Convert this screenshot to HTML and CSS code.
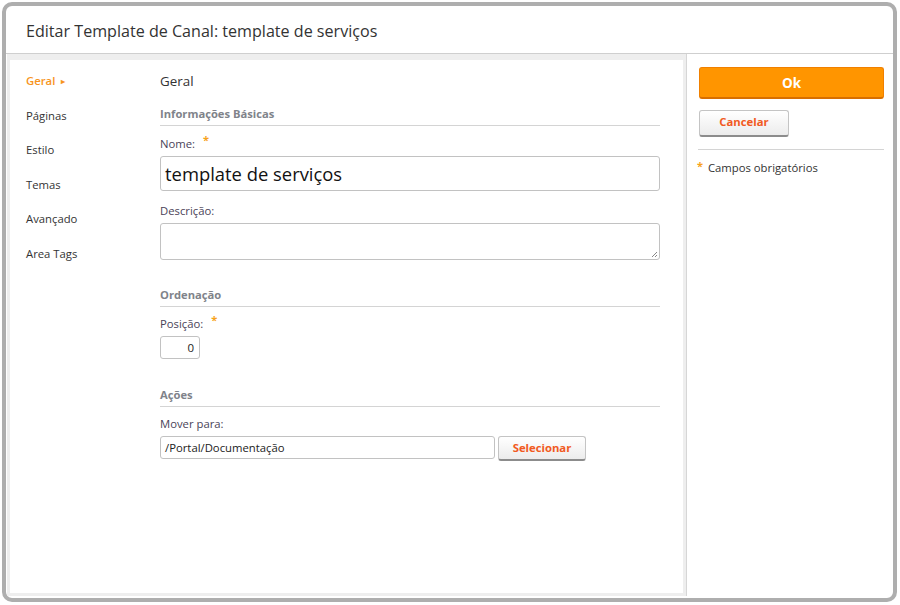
FILE: index.html
```html
<!DOCTYPE html>
<html lang="pt">
<head>
<meta charset="utf-8">
<title>Editar Template de Canal</title>
<link rel="stylesheet" href="styles.css">
</head>
<body>
<div class="frame">
  <header class="header">
    <h1 class="title">Editar Template de Canal: template de serviços</h1>
  </header>
  <div class="body">
    <main class="main">
      <nav class="nav">
        <a class="nav-item active">Geral <span class="arrow">&#9656;</span></a>
        <a class="nav-item">Páginas</a>
        <a class="nav-item">Estilo</a>
        <a class="nav-item">Temas</a>
        <a class="nav-item">Avançado</a>
        <a class="nav-item">Area Tags</a>
      </nav>
      <div class="content">
        <h2 class="page-title">Geral</h2>

        <section class="section first">
          <h3 class="section-title">Informações Básicas</h3>
          <label class="label">Nome: <span class="req">*</span></label>
          <div class="input big">template de serviços</div>
          <label class="label gap">Descrição:</label>
          <div class="textarea"><svg class="grip" width="7" height="7" viewBox="0 0 7 7"><path d="M6 1L1 6M6 4L4 6" stroke="#888" stroke-width="1"/></svg></div>
        </section>

        <section class="section">
          <h3 class="section-title">Ordenação</h3>
          <label class="label">Posição: <span class="req">*</span></label>
          <div class="input small">0</div>
        </section>

        <section class="section last">
          <h3 class="section-title">Ações</h3>
          <label class="label">Mover para:</label>
          <div class="row">
            <div class="input path">/Portal/Documentação</div>
            <button class="btn select">Selecionar</button>
          </div>
        </section>
      </div>
    </main>
    <aside class="side">
      <button class="btn ok">Ok</button>
      <button class="btn cancel">Cancelar</button>
      <div class="sep"></div>
      <p class="note"><span class="req">*</span> Campos obrigatórios</p>
    </aside>
  </div>
</div>
</body>
</html>
```

FILE: styles.css
```css
* { box-sizing: border-box; }
html, body { margin: 0; padding: 0; background: #fff; }
body {
  font-family: "Open Sans", "Noto Sans", sans-serif;
  color: #333;
  padding: 2px;
}
.frame {
  width: 895px;
  height: 600px;
  border: 4px solid #aeaeae;
  border-radius: 10px;
  background: #fff;
  display: flex;
  flex-direction: column;
  overflow: hidden;
}
.header {
  height: 48px;
  border-bottom: 1px solid #cfcfcf;
  padding: 2px 0 0 20px;
  display: flex;
  align-items: center;
  flex: none;
}
.title {
  margin: 0;
  font-size: 16.1px;
  font-weight: 400;
  color: #333;
}
.body {
  flex: 1;
  display: flex;
  padding: 0 0 2px 1px;
  min-height: 0;
}
.main {
  flex: none;
  width: 679px;
  display: flex;
  border-style: solid;
  border-color: #eeeeee;
  border-width: 6px 3px 3px 3px;
}
.side {
  flex: 1;
  border-left: 1px solid #d6d6d6;
  padding: 13px 10px 0 12px;
  display: flex;
  flex-direction: column;
  align-items: flex-start;
}
.nav {
  width: 150px;
  flex: none;
  padding: 11px 0 0 16px;
  display: flex;
  flex-direction: column;
  gap: 14.5px;
}
.nav-item {
  font-size: 11.3px;
  line-height: 20px;
  color: #333;
  display: block;
}
.nav-item.active {
  color: #f7941d;
  font-weight: 600;
}
.arrow {
  font-size: 8px;
  margin-left: 3px;
  vertical-align: 1px;
}
.content {
  width: 500px;
  padding-top: 11px;
}
.page-title {
  margin: 0;
  font-size: 13.4px;
  font-weight: 400;
  line-height: 20px;
  color: #333;
}
.section { margin-top: 26px; }
.section.first { margin-top: 14px; }
.section.last { margin-top: 27px; }
.section-title {
  margin: 0 0 8px;
  font-size: 11.2px;
  font-weight: 700;
  line-height: 18px;
  color: #80838a;
  padding-bottom: 2px;
  border-bottom: 1px solid #d4d4d4;
}
.first .section-title { margin-bottom: 9px; }
.label {
  display: block;
  font-size: 11.3px;
  line-height: 18px;
  color: #4a4358;
  margin-bottom: 3px;
}
.label.gap { margin-top: 11px; }
.req {
  color: #f7a21b;
  font-size: 11px;
  position: relative;
  top: -4px;
  margin-left: 5px;
  font-weight: 700;
  line-height: 0;
}
.input {
  border: 1px solid #c2c2c2;
  border-radius: 3px;
  background: #fff;
  font-size: 11.3px;
  color: #222;
  display: flex;
  align-items: center;
  padding: 0 4px;
}
.input.big {
  height: 35px;
  font-size: 18.4px;
  padding-left: 4px;
  color: #111;
}
.textarea {
  height: 37px;
  border: 1px solid #c2c2c2;
  border-radius: 3px;
  position: relative;
}
.grip { position: absolute; right: 1px; bottom: 1px; }
.input.small {
  width: 40px;
  height: 23px;
  justify-content: flex-end;
  padding-right: 5px;
  font-size: 11.5px;
}
.row { display: flex; gap: 3px; align-items: flex-start; }
.input.path { width: 335px; height: 23px; }
.btn {
  font-family: inherit;
  cursor: pointer;
  border-radius: 3px;
}
.btn.select {
  width: 88px;
  height: 25px;
  border: 1px solid #c4c4c4;
  border-bottom: 2px solid #8c8c8c;
  background: linear-gradient(#ffffff, #ececec);
  color: #f15a22;
  font-weight: 700;
  font-size: 11.3px;
  padding: 0 0 2px;
}
.btn.ok {
  width: 185px;
  height: 32px;
  border: 1px solid #f08000;
  border-bottom: 2px solid #d86f00;
  background: #ff9500;
  color: #fff;
  font-weight: 700;
  font-size: 13.5px;
  padding: 0;
}
.btn.cancel {
  margin-top: 11px;
  width: 90px;
  height: 27px;
  border: 1px solid #c4c4c4;
  border-bottom: 2px solid #8c8c8c;
  background: linear-gradient(#ffffff, #ececec);
  color: #f15a22;
  font-weight: 700;
  font-size: 11.3px;
  padding: 0 0 3px;
}
.sep {
  width: 186px;
  margin-left: -1px;
  height: 1px;
  background: #d4d4d4;
  margin-top: 12px;
}
.note {
  margin: 9px 0 0;
  font-size: 11.3px;
  line-height: 18px;
  color: #333;
}
.note .req { margin-left: -2px; margin-right: 2px; top: -2px; font-size: 11px; }
```
